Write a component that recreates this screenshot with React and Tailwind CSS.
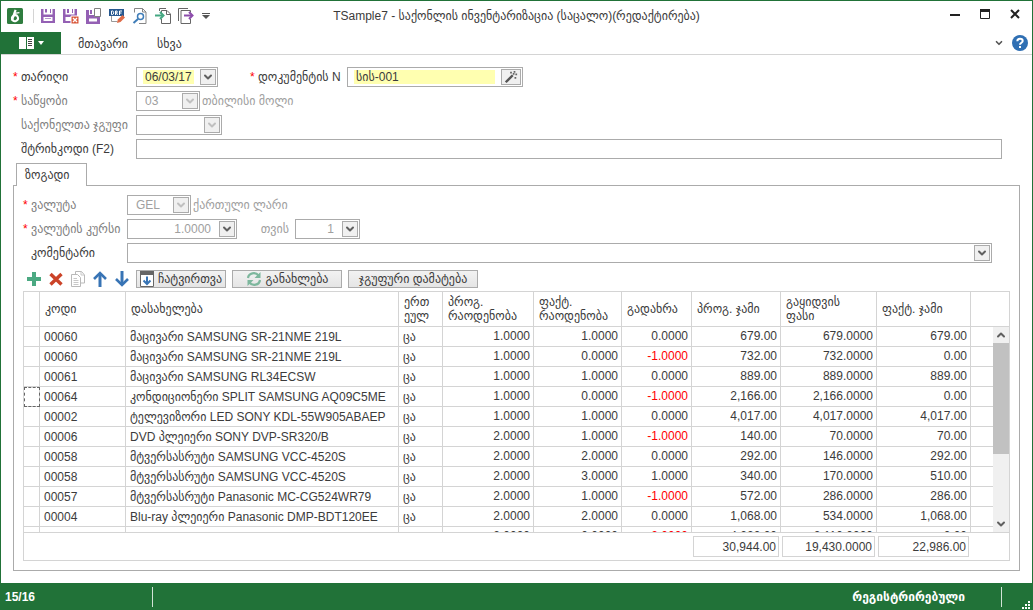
import { ChevronDown, ChevronUp } from 'lucide-react';
import clsx from 'clsx';

const ROWS = [
  ['00060', 'მაცივარი SAMSUNG SR-21NME 219L', '1.0000', '1.0000', '0.0000', '679.00', '679.0000', '679.00'],
  ['00060', 'მაცივარი SAMSUNG SR-21NME 219L', '1.0000', '0.0000', '-1.0000', '732.00', '732.0000', '0.00'],
  ['00061', 'მაცივარი SAMSUNG RL34ECSW', '1.0000', '1.0000', '0.0000', '889.00', '889.0000', '889.00'],
  ['00064', 'კონდიციონერი SPLIT SAMSUNG AQ09C5ME', '1.0000', '0.0000', '-1.0000', '2,166.00', '2,166.0000', '0.00'],
  ['00002', 'ტელევიზორი LED SONY KDL-55W905ABAEP', '1.0000', '1.0000', '0.0000', '4,017.00', '4,017.0000', '4,017.00'],
  ['00006', 'DVD პლეიერი SONY DVP-SR320/B', '2.0000', '1.0000', '-1.0000', '140.00', '70.0000', '70.00'],
  ['00058', 'მტვერსასრუტი SAMSUNG VCC-4520S', '2.0000', '2.0000', '0.0000', '292.00', '146.0000', '292.00'],
  ['00058', 'მტვერსასრუტი SAMSUNG VCC-4520S', '2.0000', '3.0000', '1.0000', '340.00', '170.0000', '510.00'],
  ['00057', 'მტვერსასრუტი Panasonic MC-CG524WR79', '2.0000', '1.0000', '-1.0000', '572.00', '286.0000', '286.00'],
  ['00004', 'Blu-ray პლეიერი Panasonic DMP-BDT120EE', '2.0000', '2.0000', '0.0000', '1,068.00', '534.0000', '1,068.00'],
  ['', '', '2.0000', '0.0000', '-2.0000', '4,220.00', '2,110.0000', '0.00'],
];

const HEADERS = [
  'კოდი',
  'დასახელება',
  'ერთ\nეულ',
  'პროგ.\nრაოდენობა',
  'ფაქტ.\nრაოდენობა',
  'გადახრა',
  'პროგ. ჯამი',
  'გაყიდვის\nფასი',
  'ფაქტ. ჯამი',
];

const FOCUSED_ROW = 3;

const Columns = () => (
  <colgroup>
    <col className="w-4" />
    <col className="w-[86px]" />
    <col className="w-[273px]" />
    <col className="w-11" />
    <col className="w-[91px]" />
    <col className="w-[88px]" />
    <col className="w-[70px]" />
    <col className="w-[89px]" />
    <col className="w-24" />
    <col className="w-[94px]" />
    <col />
  </colgroup>
);

const Icon = ({ size = 16, className, children }) => (
  <svg width={size} height={size} viewBox="0 0 16 16" fill="none" className={clsx('shrink-0', className)} aria-hidden="true">
    {children}
  </svg>
);

const Logo = () => (
  <Icon>
    <rect width="16" height="16" rx="1.5" fill="#2f7d3f" />
    <path d="M8.6 1.8 4.8 12.6" stroke="#fff" strokeWidth="2.2" />
    <path d="M7 5.4 12.4 4.6" stroke="#fff" strokeWidth="1.4" />
    <ellipse cx="8" cy="10.2" rx="3" ry="2.9" transform="rotate(-25 8 10.2)" stroke="#fff" strokeWidth="2" />
  </Icon>
);

const SaveIcon = () => (
  <Icon>
    <path d="M1 1h2.5v5.5h9V1H15v14H1z" fill="#9460b4" />
    <path d="M5 1h6v4H5z" fill="#fff" />
    <path d="M5 1h2v3.5H5zM10 1h1v4h-1z" fill="#9460b4" />
    <path d="M3.5 9h9v4h-9z" fill="#fff" />
    <path d="M5 10.5h6" stroke="#b894cc" />
  </Icon>
);

const SaveCloseIcon = () => (
  <Icon>
    <path d="M0 1h2.5v5.5h9V1H14v14H0z" fill="#9460b4" />
    <path d="M4 1h2v4H4zM9 1h1v4H9z" fill="#9460b4" />
    <path d="M2.5 9h10v4h-10z" fill="#fff" />
    <path d="M8 8h8v8H8z" fill="#d9583b" stroke="#fff" />
    <path d="m10 10 4 4m0-4-4 4" stroke="#fff" strokeWidth="1.4" />
  </Icon>
);

const SaveNewIcon = () => (
  <Icon>
    <path d="M0 2h3v5h8v2h3v7H0z" fill="#9460b4" />
    <path d="M4 2h2v4H4z" fill="#9460b4" />
    <path d="M3 10.5h8v3H3z" fill="#fff" />
    <path d="M8.5.5h6v8h-6z" fill="#fff" stroke="#808080" />
  </Icon>
);

const DraftIcon = () => (
  <Icon>
    <path d="M2.5 8v5.5h6M14.5 8v1" stroke="#999" />
    <rect y="1" width="15" height="7" fill="#27588f" />
    <path d="M2.5 3v3.5h1.2q1-.2 1-1.700t-1-1.800zM6.500 7V3h1.600v1.800H6.500m1 0L8.500 7M10.500 7V3h2.500M10.500 5h2" stroke="#fff" />
    <path d="m8 15 .8-3.500L13.500 7 16 9.500 11.500 14z" fill="#de6b48" />
  </Icon>
);

const PreviewIcon = () => (
  <Icon>
    <path d="M2.5 4.5V.5h8L14 4v11.500H7" stroke="#858585" />
    <path d="M10.500.5V4H14" stroke="#858585" />
    <circle cx="8.500" cy="8.500" r="3" stroke="#3f7db8" strokeWidth="1.500" />
    <path d="m6 11-4.500 4" stroke="#3f7db8" strokeWidth="2" />
  </Icon>
);

const ImportIcon = () => (
  <Icon>
    <path d="M4.500 3V.5H11M6.500 5V2.500h5.500l3.500 3.500v9.500h-9V11M11.500 2.500V6.500h4" stroke="#666" />
    <path d="M0 7.500h7" stroke="#44a882" strokeWidth="2" />
    <path d="m5 4 3.500 3.500L5 11" stroke="#44a882" strokeWidth="2" />
  </Icon>
);

const ExportIcon = () => (
  <Icon>
    <path d="M.5 13V.5H10M12.500 4.500v-2h-9.500v13h9.500V11" stroke="#666" />
    <path d="M6 7.500h8" stroke="#8d4dac" strokeWidth="2" />
    <path d="m11 4 3.500 3.500L11 11" stroke="#8d4dac" strokeWidth="2" />
  </Icon>
);

const AddIcon = () => (
  <Icon>
    <path d="M8 1v14M1 8h14" stroke="#4ba982" strokeWidth="4" />
  </Icon>
);

const DeleteIcon = () => (
  <Icon>
    <path d="m2.500 3 11 10.500m0-10.500-11 10.500" stroke="#cb4328" strokeWidth="3.400" />
  </Icon>
);

const CopyIcon = () => (
  <Icon>
    <path d="M5.500 3V.5h6L14.500 4v8H11" stroke="#b9b9b9" />
    <path d="M1.500 3.500h6l3 3v9h-9z" fill="#fff" stroke="#b9b9b9" />
    <path d="M11 .5V4h3M3.500 7.500H7m-3.500 2h5m-5 2h5m-5 2h5" stroke="#c8c8c8" />
  </Icon>
);

const UpIcon = () => (
  <Icon>
    <path d="M8 2v14" stroke="#3874b5" strokeWidth="3" />
    <path d="m2 8 6-6 6 6" stroke="#3874b5" strokeWidth="2.600" />
  </Icon>
);

const DownIcon = () => (
  <Icon>
    <path d="M8 0v14" stroke="#3874b5" strokeWidth="3" />
    <path d="m2 8 6 6 6-6" stroke="#3874b5" strokeWidth="2.600" />
  </Icon>
);

const LoadIcon = () => (
  <svg width="14" height="16" viewBox="0 0 14 16" fill="none" className="shrink-0" aria-hidden="true">
    <path d="M.5.5h13v15H.5z" fill="#fff" stroke="#666" />
    <path d="M0 0h14v4H0z" fill="#666" />
    <path d="M7 5.500V13M3.500 9.500 7 13l3.500-3.500" stroke="#3874b5" strokeWidth="2" />
  </svg>
);

const RefreshIcon = () => (
  <Icon>
    <path d="M2 7c.6-5.200 7.600-6.400 10.500-2.500M14 9c-.6 5.200-7.600 6.400-10.500 2.500" stroke="#7db79d" strokeWidth="2.200" />
    <path d="M14.500 1v6h-6zM1.500 15V9h6z" fill="#7db79d" />
  </Icon>
);

const WandIcon = () => (
  <Icon size={14}>
    <path d="m2 14 8-8" stroke="#555" strokeWidth="2.800" />
    <path d="M7 2h2v2H7zM11 1h2v2h-2zM13 4h2v2h-2zM12 8h2v2h-2zM10 3.500h2v2h-2z" fill="#666" />
  </Icon>
);

const QUICK_ACTIONS = [
  { label: 'Save', icon: SaveIcon },
  { label: 'Save and close', icon: SaveCloseIcon },
  { label: 'Save and new', icon: SaveNewIcon },
  { label: 'Draft', icon: DraftIcon },
  { label: 'Preview', icon: PreviewIcon },
  { label: 'Import', icon: ImportIcon },
  { label: 'Export', icon: ExportIcon },
];

const FieldLabel = ({ htmlFor, required, muted, className, children }) => (
  <label htmlFor={htmlFor} className={clsx('flex shrink-0 whitespace-nowrap', muted && 'text-[#808080]', className)}>
    <span className="w-2 text-[#ff0000]">{required ? '*' : ''}</span>
    {children}
  </label>
);

const arrowBox = 'flex h-4 w-4 items-center justify-center border border-[#ababab] bg-[#f0f0f0]';

const SelectField = ({ id, value = '', muted, disabled, className }) => (
  <div className={clsx('relative h-5 border border-[#ababab] bg-white', className)}>
    <select
      id={id}
      disabled={disabled}
      className={clsx('block h-full w-full appearance-none pl-2 outline-none', muted && 'text-[#a0a0a0]')}
    >
      <option>{value}</option>
    </select>
    <span className={clsx(arrowBox, 'pointer-events-none absolute top-px right-px')}>
      <ChevronDown size={12} strokeWidth={4} className={disabled ? 'text-[#c0c0c0]' : 'text-[#606060]'} />
    </span>
  </div>
);

const ButtonField = ({ id, value, muted, buttonLabel, className }) => (
  <div className={clsx('flex h-5 items-center border border-[#ababab] bg-white pr-px', className)}>
    <input
      id={id}
      type="text"
      defaultValue={value}
      className={clsx('h-4 min-w-0 flex-1 pr-2 text-right outline-none', muted && 'text-[#a0a0a0]')}
    />
    <button type="button" aria-label={buttonLabel} className={arrowBox}>
      <ChevronDown size={12} strokeWidth={4} className="text-[#606060]" />
    </button>
  </div>
);

const toolButton =
  'flex h-[18px] items-center overflow-hidden border border-[#ababab] bg-linear-to-b from-[#f2f2f2] to-[#e5e5e5] whitespace-nowrap';

const TitleBar = () => (
  <header className="relative flex h-[31px] shrink-0 items-center justify-between pr-3 pb-0.5 pl-1.5">
    <div className="flex items-center">
      <Logo />
      <span className="mr-1.5 ml-2.5 h-3.5 w-px bg-[#d4d4d4]" />
      <div className="flex gap-[7px]">
        {QUICK_ACTIONS.map(({ label, icon: ActionIcon }) => (
          <button key={label} type="button" aria-label={label}>
            <ActionIcon />
          </button>
        ))}
      </div>
      <button type="button" aria-label="Customize" className="ml-2">
        <svg width="8" height="6" viewBox="0 0 8 6" aria-hidden="true">
          <path d="M0 0h8v1H0zM0 2h8L4 6z" fill="#555" />
        </svg>
      </button>
    </div>
    <h1 className="pointer-events-none absolute inset-x-0 text-center whitespace-nowrap">
      TSample7 - საქონლის ინვენტარიზაცია (საცალო)(რედაქტირება)
    </h1>
    <div className="flex items-center gap-5 pb-1">
      <button type="button" aria-label="Minimize">
        <svg width="10" height="10" aria-hidden="true">
          <path d="M0 5h10v2H0z" fill="#222" />
        </svg>
      </button>
      <button type="button" aria-label="Maximize">
        <svg width="10" height="10" aria-hidden="true">
          <path d="M.5 .5h9v9h-9z" fill="none" stroke="#222" />
          <path d="M0 0h10v3H0z" fill="#222" />
        </svg>
      </button>
      <button type="button" aria-label="Close">
        <svg width="10" height="10" aria-hidden="true">
          <path d="m1 1 8 8m0-8-8 8" fill="none" stroke="#222" strokeWidth="2" />
        </svg>
      </button>
    </div>
  </header>
);

const Ribbon = () => (
  <nav className="flex h-[23px] shrink-0 items-stretch border-b border-[#d4d4d4] pr-1">
    <button type="button" aria-label="Menu" className="flex w-[60px] items-center justify-center gap-1 bg-[#217238]">
      <svg width="15" height="12" aria-hidden="true">
        <path d="M0 0h7v12H0zM8 0h7v12H8z" fill="#fff" />
        <path d="M9 2.500h4M9 4.500h4M9 6.500h4M9 8.500h4" stroke="#444" />
      </svg>
      <svg width="6" height="4" aria-hidden="true">
        <path d="M0 0h6L3 4z" fill="#fff" />
      </svg>
    </button>
    <a href="#home" className="flex items-center px-[17px] pt-0.5">მთავარი</a>
    <a href="#other" className="flex items-center px-3 pt-0.5">სხვა</a>
    <div className="ml-auto flex items-center gap-2">
      <button type="button" aria-label="Collapse">
        <ChevronDown size={10} strokeWidth={4} className="text-[#555555]" />
      </button>
      <button type="button" aria-label="Help">
        <Icon>
          <circle cx="8" cy="8" r="8" fill="#2f6fb3" />
          <path d="M5.300 6.200c0-3.400 5.400-3.200 5.400-.2 0 1.800-2.700 1.800-2.700 3.800M8 11v2" stroke="#fff" strokeWidth="2" />
        </Icon>
      </button>
    </div>
  </nav>
);

const DocumentForm = () => (
  <div className="flex flex-col gap-1 pr-[18px]">
    <div className="flex h-5 items-center">
      <FieldLabel htmlFor="date" required className="w-[123px]">თარიღი</FieldLabel>
      <div className="flex h-5 w-[82px] items-center border border-[#ababab] pr-px pl-1.5">
        <input id="date" type="text" defaultValue="06/03/17" className="mr-1.5 h-[14px] min-w-0 flex-1 bg-[#ffffb0] pl-0.5 outline-none" />
        <button type="button" aria-label="Calendar" className={arrowBox}>
          <ChevronDown size={12} strokeWidth={4} className="text-[#606060]" />
        </button>
      </div>
      <FieldLabel htmlFor="number" required className="ml-8 w-[97px]">დოკუმენტის N</FieldLabel>
      <div className="flex h-5 w-44 items-center border border-[#ababab] pr-px pl-1.5">
        <input id="number" type="text" defaultValue="სის-001" className="mr-1.5 h-[14px] min-w-0 flex-1 bg-[#ffffb0] pl-0.5 outline-none" />
        <button type="button" aria-label="Generate" className="flex h-4 w-5 items-center justify-center border border-[#ababab] bg-[#f0f0f0]">
          <WandIcon />
        </button>
      </div>
    </div>
    <div className="flex h-5 items-center">
      <FieldLabel htmlFor="warehouse" required muted className="w-[123px]">საწყობი</FieldLabel>
      <SelectField id="warehouse" value="03" muted disabled className="w-16" />
      <span className="ml-0.5 text-[#a0a0a0]">თბილისი მოლი</span>
    </div>
    <div className="flex h-5 items-center">
      <FieldLabel htmlFor="group" muted className="w-[123px]">საქონელთა ჯგუფი</FieldLabel>
      <SelectField id="group" disabled className="w-[86px]" />
    </div>
    <div className="flex h-5 items-center">
      <FieldLabel htmlFor="barcode" className="w-[123px]">შტრიხკოდი (F2)</FieldLabel>
      <input id="barcode" type="text" className="h-5 min-w-0 flex-1 border border-[#ababab] px-1 outline-none" />
    </div>
  </div>
);

const CurrencyForm = () => (
  <div className="flex flex-col gap-1 pr-[18px]">
    <div className="flex h-5 items-center">
      <FieldLabel htmlFor="currency" required muted className="w-[104px]">ვალუტა</FieldLabel>
      <SelectField id="currency" value="GEL" muted disabled className="w-16" />
      <span className="ml-0.5 text-[#a0a0a0]">ქართული ლარი</span>
    </div>
    <div className="flex h-5 items-center">
      <FieldLabel htmlFor="rate" required muted className="w-[104px]">ვალუტის კურსი</FieldLabel>
      <ButtonField id="rate" value="1.0000" muted buttonLabel="Calculator" className="w-[110px]" />
      <label htmlFor="per" className="w-[58px] pr-1.5 text-right text-[#a0a0a0]">თვის</label>
      <ButtonField id="per" value="1" muted buttonLabel="Calculator" className="w-[65px]" />
    </div>
    <div className="flex h-5 items-center">
      <FieldLabel htmlFor="comment" className="w-[104px]">კომენტარი</FieldLabel>
      <SelectField id="comment" className="min-w-0 flex-1" />
    </div>
  </div>
);

const Toolbar = () => (
  <div className="mt-1.5 flex h-5 items-center gap-1.5 pl-[3px]">
    <button type="button" aria-label="Add"><AddIcon /></button>
    <button type="button" aria-label="Delete"><DeleteIcon /></button>
    <button type="button" aria-label="Copy"><CopyIcon /></button>
    <button type="button" aria-label="Move up"><UpIcon /></button>
    <button type="button" aria-label="Move down"><DownIcon /></button>
    <button type="button" className={clsx(toolButton, 'w-[90px] justify-start gap-1 pl-[3px]')}>
      <LoadIcon />
      ჩატვირთვა
    </button>
    <button type="button" className={clsx(toolButton, 'w-[110px] justify-center gap-1')}>
      <RefreshIcon />
      განახლება
    </button>
    <button type="button" className={clsx(toolButton, 'w-[130px] justify-center')}>ჯგუფური დამატება</button>
  </div>
);

const cell = 'border-r border-b border-[#d4d4d4]';

const ItemsGrid = () => (
  <div className="mt-0.5 flex min-h-0 flex-1 flex-col border border-[#d4d4d4]">
    <div className="relative min-h-0 flex-1 overflow-hidden">
      <table className="w-full table-fixed border-separate border-spacing-0">
        <Columns />
        <thead>
          <tr className="h-[35px]">
            <th className={cell} />
            {HEADERS.map((header) => (
              <th key={header} className={clsx(cell, 'pl-[5px] text-left leading-[14px] font-normal whitespace-pre-line')}>
                {header}
              </th>
            ))}
            <th className="border-b border-[#d4d4d4]" />
          </tr>
        </thead>
        <tbody>
          {ROWS.map(([code, name, ...numbers], index) => (
            <tr key={index} className="h-5 leading-4 whitespace-nowrap">
              <td className={clsx(cell, index === FOCUSED_ROW && 'outline-1 -outline-offset-1 outline-dashed outline-[#666666]')} />
              <td className={clsx(cell, 'pl-1')}>{code}</td>
              <td className={clsx(cell, 'overflow-hidden pl-1')}>{name}</td>
              <td className={clsx(cell, 'pl-1')}>{code && 'ცა'}</td>
              {numbers.map((value, column) => (
                <td
                  key={column}
                  className={clsx(cell, 'pr-[3px] pb-0.5 text-right', value.startsWith('-') && 'text-[#ff0000]')}
                >
                  {value}
                </td>
              ))}
              <td className="border-b border-[#d4d4d4]" />
            </tr>
          ))}
        </tbody>
      </table>
      <div className="absolute top-[35px] right-0 bottom-0 flex w-4 flex-col bg-[#f0f0f0]">
        <button type="button" aria-label="Scroll up" className="flex h-4 items-center justify-center">
          <ChevronUp size={12} strokeWidth={4} className="text-[#606060]" />
        </button>
        <div className="h-[111px] bg-[#c1c1c1]" />
        <button type="button" aria-label="Scroll down" className="mt-auto flex h-4 items-center justify-center">
          <ChevronDown size={12} strokeWidth={4} className="text-[#606060]" />
        </button>
      </div>
    </div>
    <table className="w-full shrink-0 table-fixed border-separate border-spacing-0 border-t border-[#d4d4d4]">
      <Columns />
      <tbody>
        <tr className="h-[27px]">
          <td colSpan={7} />
          {['30,944.00', '19,430.0000', '22,986.00'].map((total) => (
            <td key={total} className="pr-0.5 pl-px">
              <div className="h-[21px] border border-[#d4d4d4] pr-0.5 text-right leading-5">{total}</div>
            </td>
          ))}
          <td />
        </tr>
      </tbody>
    </table>
  </div>
);

const StatusBar = () => (
  <footer className="flex h-[27px] shrink-0 items-center bg-[#217238] pl-1 font-bold text-white">
    <span className="w-[147px]">15/16</span>
    <span className="h-5 w-px bg-[#d3e3d7]" />
    <span className="ml-auto">რეგისტრირებული</span>
    <span className="ml-9 h-5 w-px bg-[#d3e3d7]" />
    <svg width="8" height="8" className="mr-0.5 mb-px ml-5 self-end" aria-hidden="true">
      <path d="M6 0h2v2H6zM3 3h2v2H3zM6 3h2v2H6zM0 6h2v2H0zM3 6h2v2H3zM6 6h2v2H6z" fill="#fff" />
    </svg>
  </footer>
);

const App = () => (
  <div className="flex h-screen flex-col border border-b-0 border-[#217238] bg-white font-['Liberation_Sans','DejaVu_Sans',sans-serif] text-xs text-[#3b3b3b]">
    <TitleBar />
    <Ribbon />
    <main className="flex min-h-0 flex-1 flex-col px-3 pt-3 pb-3">
      <DocumentForm />
      <div role="tablist" className="mt-1 flex shrink-0">
        <button
          type="button"
          role="tab"
          aria-selected="true"
          className="relative -mb-px ml-[3px] h-[23px] w-[71px] border border-b-0 border-[#ababab] bg-white pl-2 text-left"
        >
          ზოგადი
        </button>
      </div>
      <section className="flex min-h-0 flex-1 flex-col border border-[#ababab] px-[9px] py-[9px]">
        <CurrencyForm />
        <Toolbar />
        <ItemsGrid />
      </section>
    </main>
    <StatusBar />
  </div>
);

export default App;
